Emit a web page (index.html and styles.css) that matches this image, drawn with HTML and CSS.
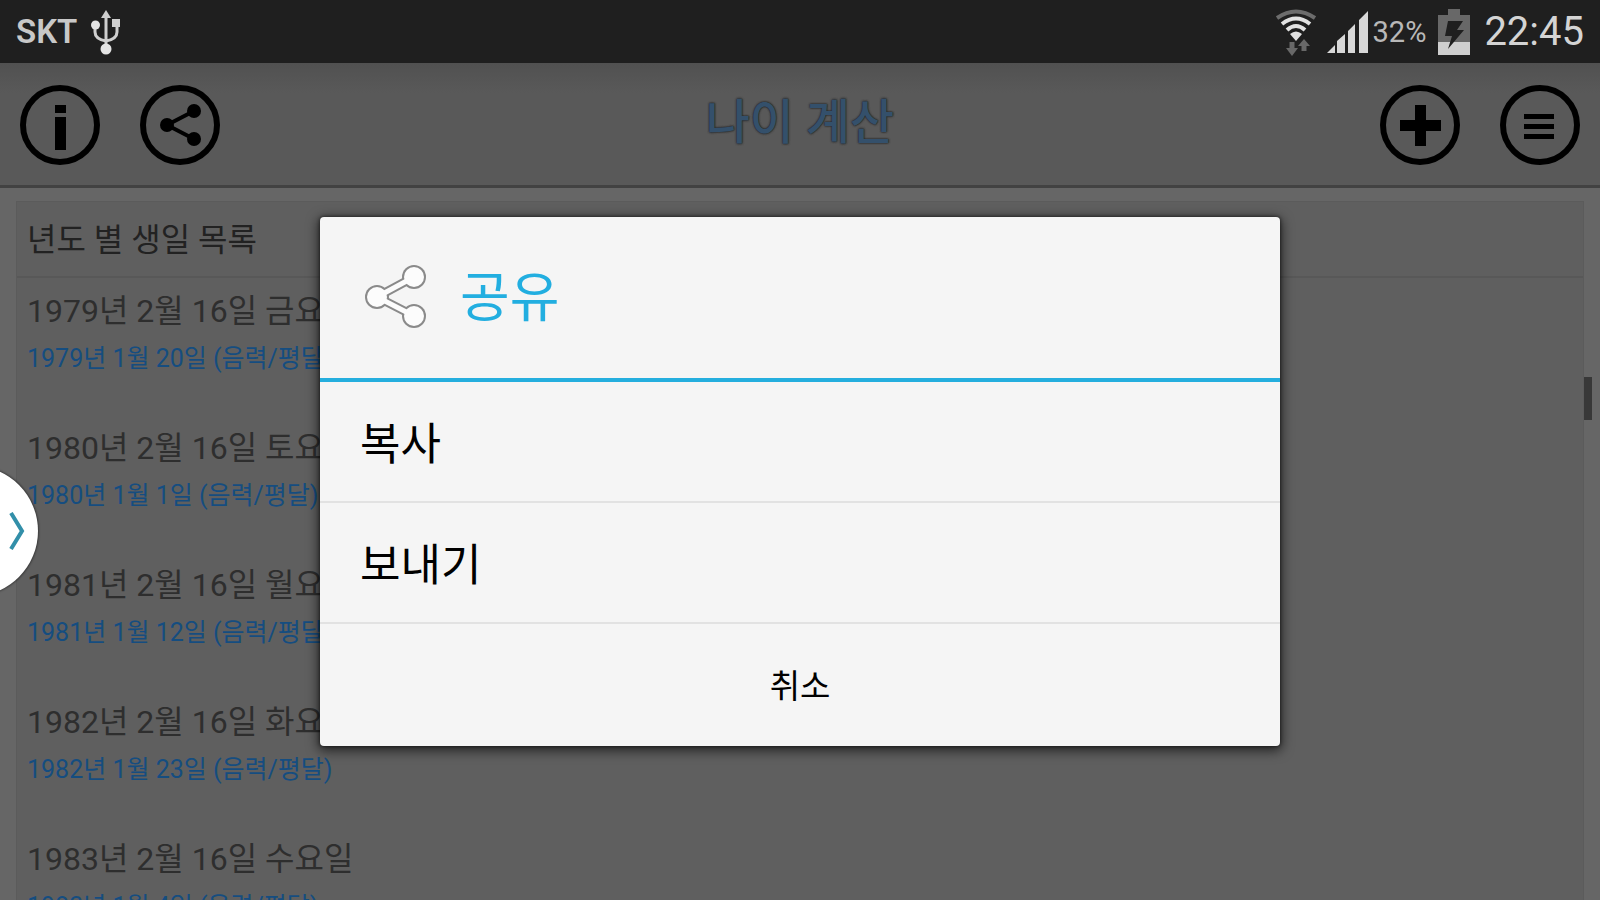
FILE: index.html
```html
<!DOCTYPE html>
<html lang="ko">
<head>
<meta charset="utf-8">
<meta name="viewport" content="width=device-width, initial-scale=1">
<title>나이 계산</title>
<link rel="stylesheet" href="styles.css">
</head>
<body>
<div class="statusbar">
  <div class="status-group">
    <span class="carrier">SKT</span>
    <svg class="usb" width="30" height="48" viewBox="0 0 30 48" fill="none" stroke="#cfcfcf" stroke-width="3">
      <path d="M15 8V40M4 16V24Q4 31 15 33Q26 31 26 24V14"/>
      <path d="M15 2L20 10H10Z" fill="#cfcfcf" stroke="none"/>
      <circle cx="15" cy="41" r="5.500" fill="#e4e4e4" stroke="none"/>
      <circle cx="4.500" cy="17" r="4.500" fill="#e4e4e4" stroke="none"/>
      <rect x="21" y="11" width="8" height="8" fill="#cfcfcf" stroke="none"/>
    </svg>
  </div>
  <div class="status-group">
    <svg class="wifi" width="42" height="48" viewBox="0 0 42 48" fill="none" stroke-width="4">
      <path d="M2 10Q21 -3 40 10" stroke="#6c6c6c"/>
      <path d="M7 16Q21 5 35 16" stroke="#e2e2e2"/>
      <path d="M12 22Q21 14 30 22" stroke="#e2e2e2"/>
      <path d="M15 26Q21 21 27 26L21 33Z" fill="#e2e2e2"/>
      <path d="M17 34V41M29 43V36" stroke="#686868" stroke-width="5"/>
      <path d="M11 40H23L17 48ZM23 38H35L29 31Z" fill="#686868"/>
    </svg>
    <svg class="signal" width="42" height="44" viewBox="0 0 42 44" fill="#d8d8d8">
      <path d="M0 43L8 35V43ZM10 31L18 24V43H10ZM21 21L28 14V43H21ZM32 10L41 1V43H32Z"/>
    </svg>
    <span class="percent">32%</span>
    <svg class="battery" width="32" height="48" viewBox="0 0 32 48">
      <path d="M10 1H22V7H32V34H0V7H10Z" fill="#686868"/>
      <path d="M0 34H32V47H0Z" fill="#cfcfcf"/>
      <path d="M10 13H25L19 22H26L10 41L14 28H7Z" fill="#1f1f1f"/>
    </svg>
    <time class="clock">22:45</time>
  </div>
</div>

<div class="app">
  <header class="appbar">
    <div class="actions">
      <button class="round" type="button" aria-label="정보">
        <svg viewBox="0 0 80 80"><circle class="ring" cx="40" cy="40" r="37"/><path d="M35 20H46V28H35ZM35 32H46V65H35Z"/></svg>
      </button>
      <button class="round" type="button" aria-label="공유">
        <svg viewBox="0 0 80 80"><circle class="ring" cx="40" cy="40" r="37"/><path d="M54 26L27 40L54 54" fill="none" stroke="#000" stroke-width="4"/><circle cx="54" cy="26" r="7"/><circle cx="27" cy="40" r="7"/><circle cx="54" cy="54" r="7"/></svg>
      </button>
    </div>
    <h1 class="app-title">나이 계산</h1>
    <div class="actions">
      <button class="round" type="button" aria-label="추가">
        <svg viewBox="0 0 80 80"><circle class="ring" cx="40" cy="40" r="37"/><path d="M35 20H46V35H61V46H46V61H35V46H20V35H35Z"/></svg>
      </button>
      <button class="round" type="button" aria-label="메뉴">
        <svg viewBox="0 0 80 80"><circle class="ring" cx="40" cy="40" r="37"/><path d="M24 29H54V34H24ZM24 39H54V44H24ZM24 49H54V54H24Z"/></svg>
      </button>
    </div>
  </header>

  <main class="content">
    <section class="panel">
      <h2 class="panel-title">년도 별 생일 목록</h2>
      <ul class="birthdays">
        <li class="birthday"><span class="solar">1979년 2월 16일 금요일</span><span class="lunar">1979년 1월 20일 (음력/평달)</span></li>
        <li class="birthday"><span class="solar">1980년 2월 16일 토요일</span><span class="lunar">1980년 1월 1일 (음력/평달)</span></li>
        <li class="birthday"><span class="solar">1981년 2월 16일 월요일</span><span class="lunar">1981년 1월 12일 (음력/평달)</span></li>
        <li class="birthday"><span class="solar">1982년 2월 16일 화요일</span><span class="lunar">1982년 1월 23일 (음력/평달)</span></li>
        <li class="birthday"><span class="solar">1983년 2월 16일 수요일</span><span class="lunar">1983년 1월 4일 (음력/평달)</span></li>
      </ul>
    </section>
  </main>
  <div class="scroll-thumb"></div>

  <div class="overlay">
    <div class="dialog" role="dialog" aria-modal="true" aria-labelledby="dialog-title">
      <div class="dialog-head">
        <svg class="share" width="64" height="64" viewBox="0 0 64 64">
          <g fill="#8a8a8a" stroke="#8a8a8a"><path d="M50 12L13 32L50 51" fill="none" stroke-width="9"/><circle cx="50" cy="12" r="12" stroke="none"/><circle cx="13" cy="32" r="12" stroke="none"/><circle cx="50" cy="51" r="12" stroke="none"/></g>
          <g fill="#fcfcfc" stroke="#fcfcfc"><path d="M50 12L13 32L50 51" fill="none" stroke-width="5"/><circle cx="50" cy="12" r="10" stroke="none"/><circle cx="13" cy="32" r="10" stroke="none"/><circle cx="50" cy="51" r="10" stroke="none"/></g>
        </svg>
        <h2 class="dialog-title" id="dialog-title">공유</h2>
      </div>
      <button class="option" type="button">복사</button>
      <button class="option" type="button">보내기</button>
      <button class="option cancel" type="button">취소</button>
    </div>
  </div>
</div>

<button class="edge-tab" type="button" aria-label="패널 열기">
  <svg width="16" height="38" viewBox="0 0 16 38" fill="none" stroke="#328fa9" stroke-width="4"><path d="M2 1L13 19L2 37"/></svg>
</button>
</body>
</html>
```
FILE: styles.css
```css
* {
  box-sizing: border-box;
}

body {
  margin: 0;
  height: 100vh;
  overflow: hidden;
  display: flex;
  flex-direction: column;
  background: #666;
  font-family: Roboto, "Noto Sans CJK KR", sans-serif;
}

h1,
h2,
ul {
  margin: 0;
  padding: 0;
}

button {
  margin: 0;
  padding: 0;
  border: 0;
  background: none;
  font: inherit;
  color: inherit;
  cursor: pointer;
}

svg {
  display: block;
  flex: none;
}

.statusbar {
  flex: none;
  height: 63px;
  padding: 0 16px;
  display: flex;
  align-items: center;
  justify-content: space-between;
  background: #1f1f1f;
  color: #cfcfcf;
}

.status-group {
  display: flex;
  align-items: center;
}

.carrier {
  font-size: 33px;
  font-weight: 600;
  color: #c8c8c8;
}

.usb {
  margin-left: 14px;
}

.signal {
  margin: 0 4px 0 10px;
}

.percent {
  font-size: 29px;
  line-height: 36px;
  color: #b8b8b8;
}

.battery {
  margin: 0 14px 0 12px;
}

.clock {
  font-size: 40px;
  line-height: 48px;
  color: #d4d4d4;
}

.app {
  position: relative;
  flex: 1;
  min-height: 0;
  overflow: hidden;
}

.appbar {
  height: 125px;
  padding: 2px 20px 0;
  display: flex;
  align-items: center;
  justify-content: space-between;
  border-bottom: 3px solid #424242;
  background: linear-gradient(#515151, #595959 30px);
}

.actions {
  display: flex;
  gap: 40px;
}

.round {
  width: 80px;
  height: 80px;
}

.ring {
  fill: none;
  stroke: #000;
  stroke-width: 6px;
}

.app-title {
  padding-bottom: 4px;
  font-size: 48px;
  line-height: 60px;
  font-weight: 500;
  color: #34506b;
  text-shadow: 0 0 2px #222, 0 0 2px #222;
}

.content {
  padding: 13px 16px 0;
}

.panel {
  background: #5f5f5f;
  border: 1px solid #5b5b5b;
}

.panel-title {
  padding: 2px 10px 0;
  border-bottom: 2px solid #585858;
  font-size: 32px;
  line-height: 72px;
  font-weight: 400;
  color: #222;
}

.birthdays {
  list-style: none;
}

.birthday {
  padding: 9px 10px 36px;
  display: flex;
  flex-direction: column;
  gap: 4px;
}

.solar {
  font-size: 32px;
  line-height: 48px;
  color: #2e2e2e;
}

.lunar {
  font-size: 25px;
  line-height: 40px;
  color: #154d80;
}

.scroll-thumb {
  position: absolute;
  top: 314px;
  right: 8px;
  width: 8px;
  height: 43px;
  background: #383838;
}

.overlay {
  position: absolute;
  inset: 0;
  padding-bottom: 1px;
  display: grid;
  place-items: center;
}

.dialog {
  width: 60%;
  display: flex;
  flex-direction: column;
  overflow: hidden;
  border-radius: 4px;
  background: #f5f5f5;
  box-shadow: 0 3px 12px 2px rgba(0, 0, 0, 0.6), 0 0 3px 1px rgba(0, 0, 0, 0.4);
}

.dialog-head {
  padding: 38px 44px 39px;
  display: flex;
  align-items: center;
  gap: 32px;
  border-bottom: 4px solid #25aede;
}

.dialog-title {
  padding-top: 4px;
  font-size: 54px;
  line-height: 80px;
  font-weight: 400;
  color: #22aee0;
}

.option {
  padding: 7px 40px 0;
  border-bottom: 2px solid #e2e2e2;
  font-size: 44px;
  line-height: 112px;
  text-align: left;
  color: #000;
}

.cancel {
  padding-bottom: 3px;
  border-bottom: 0;
  font-size: 33px;
  text-align: center;
}

.edge-tab {
  position: absolute;
  left: -92px;
  top: 466px;
  width: 130px;
  height: 130px;
  padding-right: 13px;
  display: flex;
  align-items: center;
  justify-content: flex-end;
  border-radius: 50%;
  background: #fff;
  box-shadow: 0 0 2px 1px rgba(0, 0, 0, 0.4);
}
```
